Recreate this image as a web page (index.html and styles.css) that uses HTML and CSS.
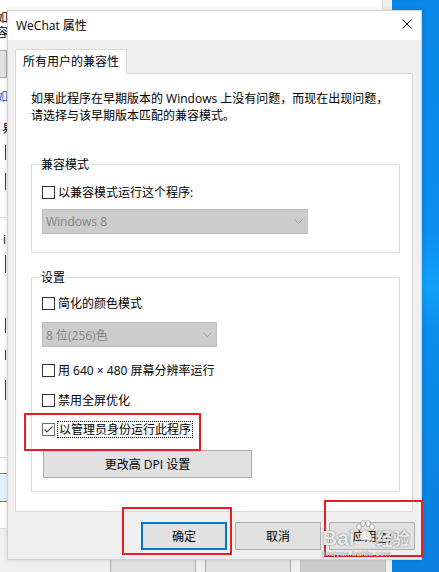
FILE: index.html
```html
<!DOCTYPE html>
<html lang="zh-CN">
<head>
<meta charset="utf-8">
<title>WeChat 属性</title>
<link rel="stylesheet" href="styles.css">
</head>
<body>
<div class="desktop">
  <div class="back-window">
    <div class="back-content">
      <span class="frag f-ru">如</span>
      <span class="frag f-rong">容</span>
      <span class="frag-box"></span>
      <span class="frag f-link">如</span>
      <span class="frag-line l1"></span>
      <span class="frag f-yi">易</span>
      <span class="frag-bar b1"></span>
      <span class="frag-bar b2"></span>
      <span class="frag-line l2"></span>
      <span class="frag-line l3"></span>
      <span class="frag f-i">i</span>
      <span class="frag-bar b3"></span>
      <span class="frag-bar b4"></span>
      <span class="frag-bar b5"></span>
      <span class="frag-bar b6"></span>
      <span class="frag-line l4"></span>
      <span class="frag-sel"></span>
    </div>
    <div class="back-actions">
      <span class="back-btn"></span>
      <span class="back-btn"></span>
      <span class="back-btn disabled"></span>
    </div>
  </div>

  <div class="dialog">
    <div class="titlebar">
      <span class="title">WeChat 属性</span>
      <svg class="close" width="10" height="10" viewBox="0 0 10 10"><path d="M0.5 0.5L9.5 9.5M9.5 0.5L0.5 9.5" stroke="#000" stroke-width="1" fill="none"/></svg>
    </div>
    <div class="body">
      <div class="tabs"><div class="tab">所有用户的兼容性</div></div>
      <div class="panel">
        <p class="intro">如果此程序在早期版本的 Windows 上没有问题，而现在出现问题，<br>请选择与该早期版本匹配的兼容模式。</p>
        <div class="group g1">
          <div class="group-title">兼容模式</div>
          <div class="check c-first"><span class="box"></span><span>以兼容模式运行这个程序:</span></div>
          <div class="select wide"><span>Windows 8</span><svg class="chev" width="9" height="5" viewBox="0 0 9 5"><path d="M0.5 0.5L4.5 4.5L8.5 0.5" stroke="#a0a0a0" fill="none"/></svg></div>
        </div>
        <div class="group g2">
          <div class="group-title">设置</div>
          <div class="check c-first2"><span class="box"></span><span>简化的颜色模式</span></div>
          <div class="select narrow"><span>8 位(256)色</span><svg class="chev" width="9" height="5" viewBox="0 0 9 5"><path d="M0.5 0.5L4.5 4.5L8.5 0.5" stroke="#a0a0a0" fill="none"/></svg></div>
          <div class="check c-res"><span class="box"></span><span>用 640 × 480 屏幕分辨率运行</span></div>
          <div class="check c-full"><span class="box"></span><span>禁用全屏优化</span></div>
          <div class="check c-admin"><span class="box checked"><svg width="11" height="11" viewBox="0 0 11 11"><path d="M1.5 5.5L4 8L9.5 2.5" stroke="#444" stroke-width="1.1" fill="none"/></svg></span><span class="focus">以管理员身份运行此程序</span></div>
          <div class="btn dpi">更改高 DPI 设置</div>
        </div>
      </div>
      <div class="actions">
        <div class="btn default">确定</div>
        <div class="btn">取消</div>
        <div class="btn">应用(<u>A</u>)</div>
      </div>
    </div>
  </div>

  <div class="mark m1"></div>
  <div class="mark m2"></div>
  <div class="mark m3"></div>

  <div class="watermark">
    <div class="wm-main"><span class="wm-bai">Bai</span><svg class="paw" width="20" height="22" viewBox="0 0 20 22"><g fill="rgba(255,255,255,0.85)" stroke="rgba(90,90,90,0.55)" stroke-width="0.8"><ellipse cx="4" cy="7" rx="2.3" ry="3"/><ellipse cx="8" cy="3.5" rx="2.3" ry="3"/><ellipse cx="13" cy="3.5" rx="2.3" ry="3"/><ellipse cx="17" cy="7" rx="2.3" ry="3"/><path d="M10.5 10c-3 0-6 5-6 8 0 2 2 3 3.5 2.5s3-1 5 0 4 0 4-2.5c0-3-3.5-8-6.5-8z"/></g></svg><span class="wm-jy">经验</span></div>
    <div class="wm-url">jingyan.baidu.com</div>
  </div>
</div>
</body>
</html>
```

FILE: styles.css
```css
* { box-sizing: border-box; }
html, body { margin: 0; padding: 0; }
body {
  width: 439px;
  height: 572px;
  overflow: hidden;
  font-family: "Open Sans", "Noto Sans CJK SC", sans-serif;
  font-size: 12px;
  color: #000;
}
.desktop {
  position: relative;
  width: 439px;
  height: 572px;
  overflow: hidden;
  background: linear-gradient(180deg, #0a86e6 0%, #0b8eef 40%, #12a0fa 50%, #0a8deb 58%, #0a80e0 100%);
}

/* back window */
.back-window {
  position: absolute;
  left: 0;
  top: 0;
  width: 392px;
  height: 572px;
  background: #f0f0f0;
}
.back-content {
  position: relative;
  width: 383px;
  height: 529px;
  background: #fff;
  border-right: 1px solid #dcdcdc;
  border-bottom: 1px solid #dcdcdc;
  overflow: hidden;
}
.frag { position: absolute; font-size: 12px; line-height: 14px; }
.f-ru { left: -4px; top: 11px; }
.f-rong { left: -4px; top: 26px; }
.f-link { left: -4px; top: 90px; color: #0066cc; }
.f-yi { left: 2px; top: 122px; }
.f-i { left: 3px; top: 233px; }
.frag-box {
  position: absolute;
  left: -20px;
  top: 50px;
  width: 27px;
  height: 28px;
  background: #e1e1e1;
  border: 1px solid #adadad;
}
.frag-line { position: absolute; left: 0; height: 1px; background: #dcdcdc; }
.l1 { top: 129px; width: 3px; }
.l2 { top: 217px; width: 7px; }
.l3 { top: 239px; width: 3px; }
.l4 { top: 457px; width: 7px; }
.frag-bar { position: absolute; left: 5px; width: 1px; background: #333; }
.b1 { top: 145px; height: 15px; }
.b2 { top: 173px; height: 17px; }
.b3 { top: 255px; height: 18px; }
.b4 { top: 318px; height: 15px; }
.b5 { top: 350px; height: 10px; }
.b6 { top: 380px; height: 20px; }
.frag-sel {
  position: absolute;
  left: 0;
  top: 473px;
  width: 8px;
  height: 29px;
  background: #e5f1fb;
  border-top: 1px solid #3d8ee0;
  border-bottom: 1px solid #3d8ee0;
}
.back-actions {
  display: flex;
  gap: 9px;
  padding-left: 110px;
  margin-top: 30px;
}
.back-btn {
  width: 86px;
  height: 28px;
  background: #e1e1e1;
  border: 1px solid #adadad;
}
.back-btn.disabled { background: #cccccc; border-color: #bfbfbf; }

/* dialog */
.dialog {
  position: absolute;
  left: 7px;
  top: 10px;
  width: 415px;
  height: 550px;
  background: #f0f0f0;
  border: 1px solid #d2d2d2;
  display: flex;
  flex-direction: column;
  box-shadow: 0 0 5px rgba(0, 0, 0, 0.12);
}
.titlebar {
  height: 29px;
  flex: none;
  background: #fff;
  display: flex;
  align-items: center;
  padding-left: 8px;
}
.title { font-size: 12px; line-height: 16px; }
.close { margin-left: auto; margin-right: 9px; align-self: flex-start; margin-top: 8px; }

.body {
  flex: 1;
  padding: 9px 0 0 7px;
}
.tabs { display: flex; }
.tab {
  position: relative;
  z-index: 1;
  width: 112px;
  height: 25px;
  margin-bottom: -1px;
  background: #fff;
  border: 1px solid #d9d9d9;
  border-bottom: none;
  padding-left: 7px;
  line-height: 23px;
}
.panel {
  width: 398px;
  height: 439px;
  background: #fff;
  border: 1px solid #d9d9d9;
  padding: 16px 0 0 15px;
}
.intro {
  margin: 0;
  line-height: 17px;
  white-space: nowrap;
}
.group {
  width: 369px;
  border: 1px solid #dcdcdc;
  padding: 0 10px;
}
.g1 { margin-top: 40px; padding-bottom: 18px; }
.g2 { margin-top: 24px; padding-bottom: 13px; }
.group-title {
  width: fit-content;
  margin-top: -9px;
  margin-left: -2px;
  padding: 0 1px;
  background: #fff;
  line-height: 17px;
}
.check {
  display: flex;
  align-items: center;
  height: 17px;
  line-height: 17px;
  white-space: nowrap;
}
.box {
  width: 13px;
  height: 13px;
  flex: none;
  border: 1px solid #333;
  background: #fff;
  margin-right: 3px;
  display: flex;
  align-items: center;
  justify-content: center;
}
.box.checked { border-color: #707070; margin-right: 2px; }
.c-first { margin-top: 11px; }
.c-first2 { margin-top: 9px; }
.c-res { margin-top: 15px; }
.c-full { margin-top: 13px; }
.c-admin { margin-top: 12px; }
.focus {
  display: inline-block;
  line-height: 15px;
  border: 1px dotted #000;
  padding: 0 1px;
}
.select {
  display: flex;
  align-items: center;
  height: 25px;
  background: #cccccc;
  border: 1px solid #bfbfbf;
  padding-left: 3px;
  color: #838383;
  white-space: nowrap;
}
.select.wide { width: 266px; margin-top: 8px; }
.select.narrow { width: 175px; margin-top: 10px; }
.chev { margin-left: auto; margin-right: 4px; }

.btn {
  display: flex;
  align-items: center;
  justify-content: center;
  width: 86px;
  height: 28px;
  background: #e1e1e1;
  border: 1px solid #adadad;
  white-space: nowrap;
}
.btn.default { border: 2px solid #0078d7; }
.btn.dpi { width: 209px; margin-top: 12px; margin-left: 1px; }
.actions {
  display: flex;
  justify-content: flex-end;
  gap: 8px;
  margin-top: 10px;
  padding-right: 6px;
}

/* annotations */
.mark {
  position: absolute;
  border: 2px solid #ec1c24;
}
.m1 { left: 24px; top: 413px; width: 177px; height: 38px; }
.m2 { left: 122px; top: 507px; width: 110px; height: 48px; }
.m3 { left: 324px; top: 500px; width: 99px; height: 57px; }

.watermark {
  position: absolute;
  left: 322px;
  top: 515px;
  width: 100px;
  color: rgba(255, 255, 255, 0.88);
  text-shadow: 0 0 1px rgba(60, 60, 60, 0.75), 0 0 2px rgba(60, 60, 60, 0.35);
  pointer-events: none;
}
.wm-main {
  display: flex;
  align-items: flex-end;
  height: 34px;
}
.wm-bai {
  font-family: "Liberation Sans", sans-serif;
  font-weight: bold;
  font-size: 21px;
  line-height: 22px;
}
.wm-jy {
  font-family: "Noto Sans CJK SC", sans-serif;
  font-weight: bold;
  font-size: 17px;
  line-height: 22px;
}
.paw { margin: 0 1px 7px 0; }
.wm-url {
  font-family: "Liberation Sans", sans-serif;
  font-size: 8px;
  line-height: 9px;
  letter-spacing: 0.3px;
}
```
